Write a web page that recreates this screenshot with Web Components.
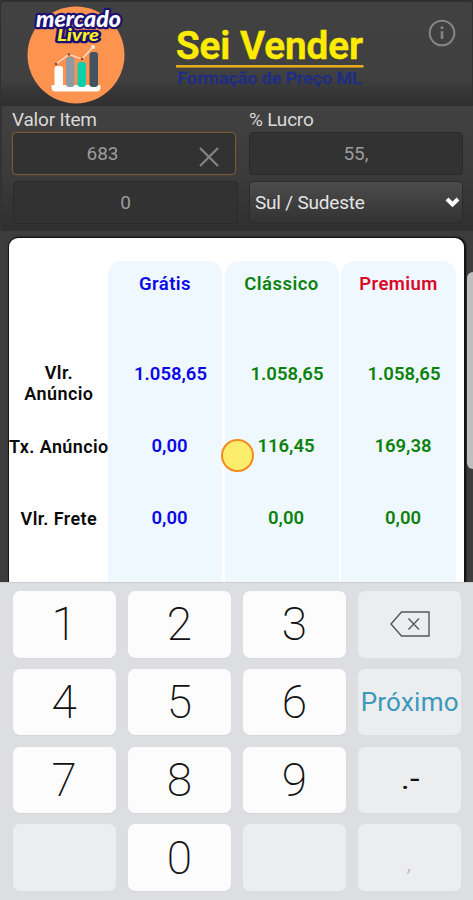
<!DOCTYPE html>
<html lang="pt-BR">
<head>
<meta charset="utf-8">
<title>Sei Vender</title>
<style>
html,body{margin:0;height:100%;overflow:hidden}
body{font-family:Roboto,"Liberation Sans",sans-serif;background:#3a3a3a}
</style>
</head>
<body>
<sei-app></sei-app>
<script>
function define(name, html, setup) {
  const t = document.createElement('template');
  t.innerHTML = html;
  customElements.define(name, class extends HTMLElement {
    constructor() {
      super();
      this.attachShadow({mode: 'open'}).append(t.content.cloneNode(true));
    }
    connectedCallback() { if (setup) setup(this, this.shadowRoot); }
  });
}

define('brand-logo', `
<style>:host{display:block;width:110px;height:104px}svg{display:block}text{font-family:Lato,"Open Sans",sans-serif;font-weight:900;font-style:italic;paint-order:stroke;stroke:#1c1275;stroke-width:4.5px;stroke-linejoin:round}</style>
<svg width="110" height="104" viewBox="24 0 110 104">
<circle cx="76" cy="55" r="48.5" fill="#fc934f"/>
<text x="36" y="27" font-size="22.500" textLength="85" lengthAdjust="spacingAndGlyphs" fill="#fff">mercado</text>
<text x="57" y="40.5" font-size="16" textLength="42" lengthAdjust="spacingAndGlyphs" fill="#fff21c">Livre</text>
<path d="M52 85.500H100V88.500Q100 91 97 91H55Q52 91 52 88.500Z" fill="#fff" stroke="#fff"/>
<rect x="54.500" y="66" width="8.500" height="21" rx="3" fill="#fff"/>
<rect x="66" y="57" width="8.500" height="30" rx="3" fill="#8d9ba5"/>
<rect x="77.500" y="62" width="8.500" height="25" rx="3" fill="#10ceaa"/>
<rect x="89.500" y="52" width="8.500" height="35" rx="3" fill="#425260"/>
<path d="M56 64L69 54.500L82 59L93 47" fill="none" stroke="#ffe3d2" stroke-width="1.300"/>
<g fill="#8d4a2c"><circle cx="56" cy="64" r="1.300"/><circle cx="69" cy="54.500" r="1.300"/><circle cx="82" cy="59" r="1.300"/></g><circle cx="93" cy="47" r="2" fill="#ffeadd"/>
</svg>`);

define('brand-title', `
<style>:host{display:block;width:200px;height:76px}svg{display:block}text{font-family:Roboto,sans-serif}</style>
<svg width="200" height="76" viewBox="170 20 200 76">
<text x="176" y="59.300" font-size="39" font-weight="600" textLength="187" lengthAdjust="spacingAndGlyphs" fill="#ffec00" stroke="#ffec00" stroke-width=".6">Sei Vender</text>
<rect x="176" y="65" width="187.500" height="2.600" fill="#e5aa1c"/>
<text x="177.500" y="84" font-size="16.500" font-weight="500" textLength="184" lengthAdjust="spacingAndGlyphs" fill="#1d2c86" stroke="#1d2c86" stroke-width=".3">Formação de Preço ML</text>
</svg>`);

define('app-header', `
<style>:host{display:flex;box-sizing:border-box;height:105px;padding:0 17px 0 24px;background:linear-gradient(#414141 0,#404040 74%,#343434 90%,#303030);border-top:2px solid #303030;border-left:1px solid #303030;border-right:1px solid #303030;border-radius:4px 4px 0 0}
brand-logo{margin:-2px 0 0 -1px}brand-title{margin:18px 0 0 36px}svg{margin:17px -1px 0 auto}</style>
<brand-logo></brand-logo><brand-title></brand-title>
<svg width="28" height="28" viewBox="0 0 28 28" fill="none" stroke="#858585" stroke-width="2"><circle cx="14" cy="14" r="12.300"/><path d="M14 12.300V20M14 7.500V10" stroke-width="2.600"/></svg>`);

define('form-field', `
<style>:host{display:block;color:#d9d9d9;font-size:19px}
label{display:block;height:25px;line-height:25px;letter-spacing:-.2px}
label:empty{display:none}
.box{box-sizing:border-box;height:43px;border:1px solid #2a2a2a;border-radius:4px;background:#323232;display:flex;align-items:center;justify-content:center;color:#9c9c9c;font-size:19px;position:relative}
:host([active]) .box{border-color:#735a35;box-shadow:0 0 2px #62492a}
:host([active]) .box span{padding-right:43px}
:host([choice]) .box{background:linear-gradient(#4c4c4c,#323232);color:#e4e4e4;letter-spacing:-.2px;justify-content:space-between;padding:0 2px 0 5px;border-color:#2b2b2b}
.box span{margin-top:-1px}
svg{display:none}:host([active]) .x{display:block;position:absolute;right:16px;top:14px}:host([choice]) .v{display:block}</style>
<label></label><div class="box"><span><slot></slot></span>
<svg class="x" width="20" height="20" fill="none" stroke="#858585" stroke-width="2.200"><path d="M1 1L19 19M19 1L1 19"/></svg>
<svg class="v" width="15" height="13" fill="none" stroke="#fff" stroke-width="4"><path d="M2 3L7.500 8.500L13 3"/></svg></div>`,
(el, r) => { r.querySelector('label').textContent = el.getAttribute('label') || ''; });

define('price-form', `
<style>:host{display:block;box-sizing:border-box;height:126px;padding:1px 10px 0 12px;background:linear-gradient(#414141,#3b3b3b 55%,#2f2f2f);border-top:1px solid #303030;border-left:2px solid #333}
.row{display:grid;grid-template-columns:224px 214px;gap:13px;margin-left:-2px}.two{margin:6px 0 0 -1px;grid-template-columns:225px 214px;gap:11px}</style>
<div class="row"><form-field label="Valor Item" active>683</form-field><form-field label="% Lucro">55,</form-field></div>
<div class="row two"><form-field>0</form-field><form-field choice>Sul / Sudeste</form-field></div>`);

define('price-cell', `
<style>:host{display:flex;align-items:center;justify-content:center;text-align:center;white-space:nowrap;line-height:21px}</style><slot></slot>`);

define('price-column', `
<style>:host{display:grid;grid-template-rows:44px 104px 74px 70px 80px;font-weight:600;font-size:18.500px;letter-spacing:0;color:#0c820c}
:host([tint]){background:#eff8ff;border-radius:14px 14px 0 0}</style><slot></slot>`);

define('price-card', `
<style>:host{display:block;box-sizing:border-box;height:351px;padding:7px 9px 0;background:#3d3d3d;overflow:hidden}
.card{box-sizing:border-box;width:455px;height:344px;background:#fff;border-radius:9px 9px 0 0;box-shadow:0 0 0 1px #151515,1px 0 2px 1px #050505;padding-top:23px;display:grid;grid-template-columns:99px 114px 114px 115px;column-gap:2.500px;margin-left:0}
.card{grid-template-columns:96.500px 114px 114px 115px}
price-column:first-child{color:#090909;letter-spacing:.4px;margin-right:-3px;font-size:18px}
.head{padding-top:2px;letter-spacing:.45px}.a{align-items:flex-start;padding-top:57px}.v{align-items:flex-start;padding:59px 0 0 11px}.c{padding-left:9px}
.blue{color:#0b08e8}.red{color:#da0926}</style>
<div class="card">
<price-column><price-cell></price-cell><price-cell class="a">Vlr.<br>Anúncio</price-cell><price-cell>Tx. Anúncio</price-cell><price-cell>Vlr. Frete</price-cell></price-column>
<price-column tint class="blue"><price-cell class="head">Grátis</price-cell><price-cell class="v">1.058,65</price-cell><price-cell class="c">0,00</price-cell><price-cell class="c">0,00</price-cell></price-column>
<price-column tint><price-cell class="head">Clássico</price-cell><price-cell class="v">1.058,65</price-cell><price-cell class="c">116,45</price-cell><price-cell class="c">0,00</price-cell></price-column>
<price-column tint><price-cell class="head red">Premium</price-cell><price-cell class="v">1.058,65</price-cell><price-cell class="c">169,38</price-cell><price-cell class="c">0,00</price-cell></price-column>
</div>`);

define('pad-key', `
<style>:host{display:flex;align-items:center;justify-content:center;border-radius:7px;background:#fcfcfc;box-shadow:0 1px 1px #d4d6da;color:#111;font-size:46px;font-weight:200;line-height:1;font-family:Roboto,sans-serif}
:host([soft]){background:#ecedef;box-shadow:0 1px 1px #dcdee1}</style><slot></slot>`);

define('number-pad', `
<style>:host{display:grid;box-sizing:border-box;height:318px;padding:8px 11.500px 9px 12.500px;background:#dcdee2;border-top:1px solid #c9ccd0;grid-template-columns:repeat(4,103.300px);grid-template-rows:repeat(4,66.500px);gap:11.300px 11.900px;overflow:hidden}
.next{font-size:26px;font-weight:400;color:#3b99bb;letter-spacing:.25px}.sym{font-size:30px;font-weight:400}.sym span{transform:scaleX(1.15);margin-top:-2px}.comma{font-size:20px;font-weight:400;font-style:italic;color:#b9bbc0;align-items:flex-end}.comma span{padding-bottom:17px}</style>
<pad-key>1</pad-key><pad-key>2</pad-key><pad-key>3</pad-key><pad-key soft><svg width="40" height="26" fill="none" stroke="#55575a" stroke-width="1.400"><path d="M1 13L11.500 1H39V25H11.500Z"/><path d="M18.500 7.500L29 18.500M29 7.500L18.500 18.500"/></svg></pad-key>
<pad-key>4</pad-key><pad-key>5</pad-key><pad-key>6</pad-key><pad-key soft class="next">Próximo</pad-key>
<pad-key>7</pad-key><pad-key>8</pad-key><pad-key>9</pad-key><pad-key soft class="sym"><span>.-</span></pad-key>
<pad-key soft></pad-key><pad-key>0</pad-key><pad-key soft></pad-key><pad-key soft class="comma"><span>,</span></pad-key>`);

define('touch-dot', `<style>:host{position:absolute;left:221px;top:439px;width:33px;height:33px;box-sizing:border-box;border:2px solid #f58b20;border-radius:50%;background:#fced6d}</style>`);
define('edge-handle', `<style>:host{position:absolute;left:467px;top:272px;width:12px;height:197px;border-radius:7px;background:#bebebe}</style>`);

define('sei-app', `
<style>:host{display:block;position:relative;width:473px;height:900px;overflow:hidden}</style>
<app-header></app-header><price-form></price-form><price-card></price-card><number-pad></number-pad><touch-dot></touch-dot><edge-handle></edge-handle>`);
</script>
</body>
</html>
